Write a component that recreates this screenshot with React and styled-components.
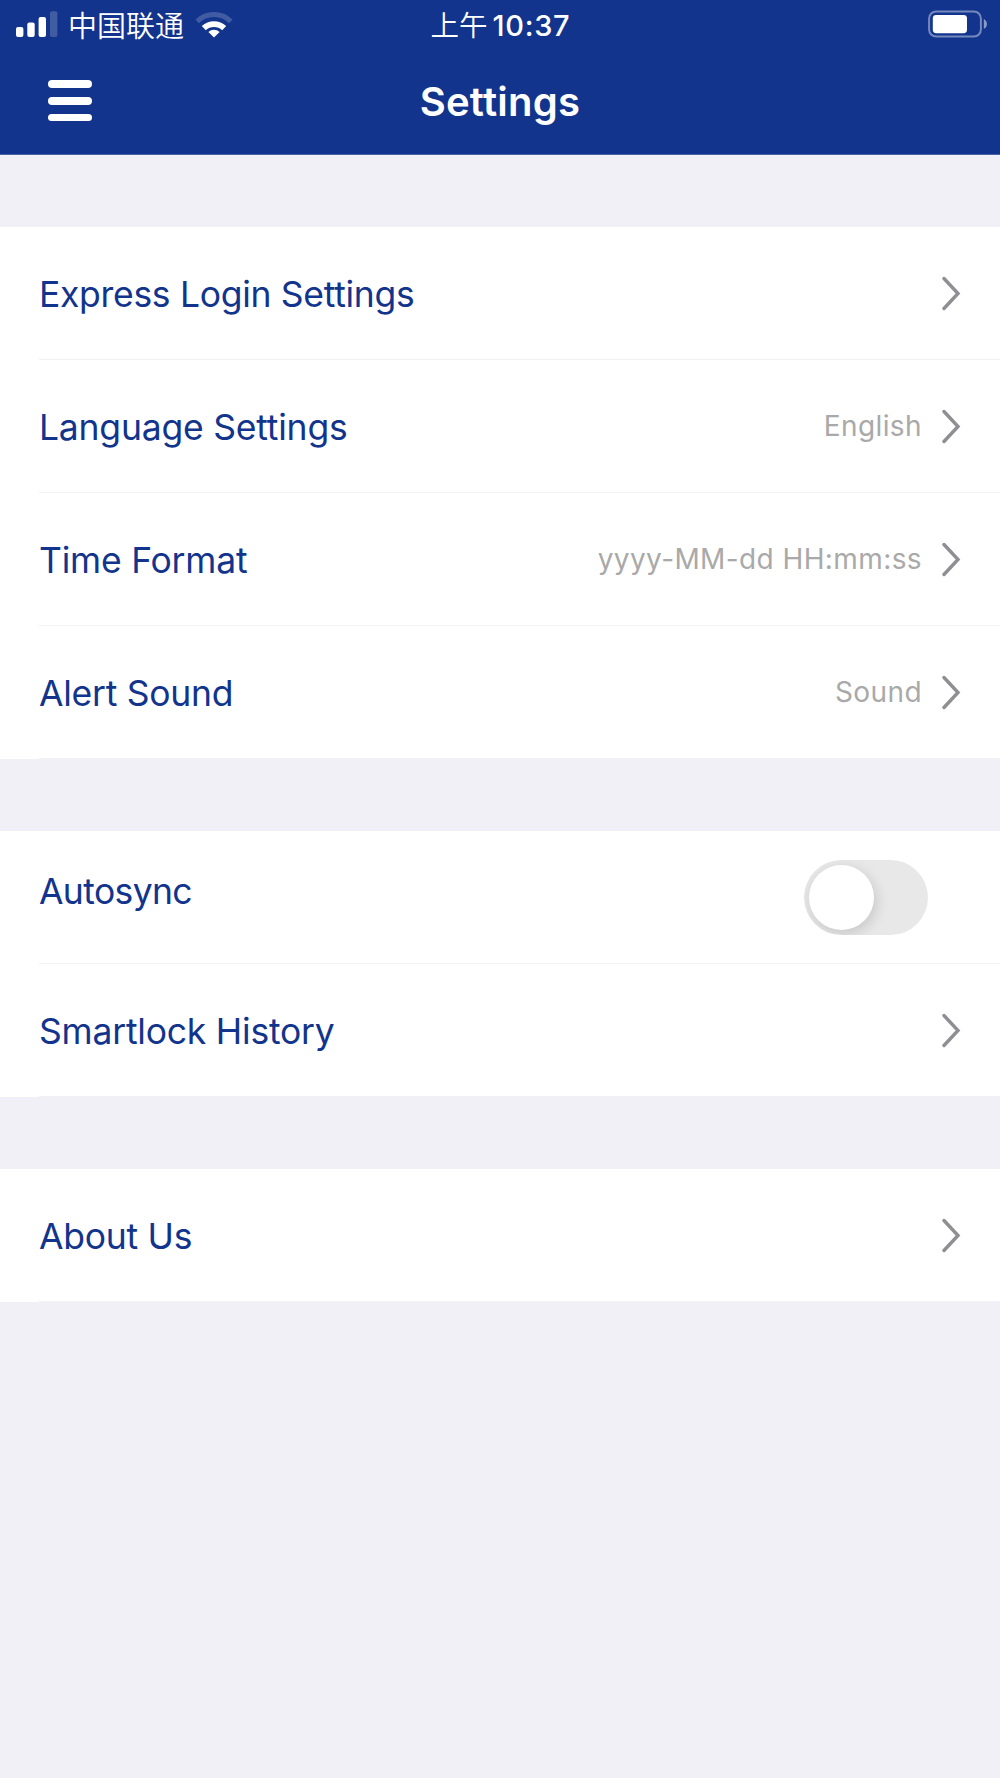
import React from 'react'
import styled, { createGlobalStyle } from 'styled-components';

class App extends React.Component {
    state = { autosync: false };

    toggleAutosync = () => {
        this.setState({ autosync: !this.state.autosync });
    }

    render() {
        return (
        <Screen>
            <GlobalStyle />
            <Header>
                <StatusBar>
                    <StatusLeft>
                        <SignalIcon />
                        <Carrier>中国联通</Carrier>
                        <WifiIcon />
                    </StatusLeft>
                    <Clock>
                        <ClockPeriod>上午</ClockPeriod>
                        <ClockTime>10:37</ClockTime>
                    </Clock>
                    <StatusRight>
                        <BatteryIcon />
                    </StatusRight>
                </StatusBar>
                <NavBar>
                    <MenuButton aria-label="Menu">
                        <MenuLine />
                        <MenuLine />
                        <MenuLine />
                    </MenuButton>
                    <Title>Settings</Title>
                </NavBar>
            </Header>
            <Group>
                <LinkRow label="Express Login Settings" spacing="-0.3px" />
                <LinkRow label="Language Settings" spacing="-0.21px" value="English" />
                <LinkRow label="Time Format" spacing="-0.22px" value="yyyy-MM-dd HH:mm:ss" />
                <LinkRow label="Alert Sound" spacing="-0.26px" value="Sound" />
            </Group>
            <Group>
                <Row>
                    <Label $raised $spacing="-0.62px">Autosync</Label>
                    <Track $on={this.state.autosync} onClick={this.toggleAutosync} aria-label="Autosync">
                        <Thumb />
                    </Track>
                </Row>
                <LinkRow label="Smartlock History" spacing="-0.21px" />
            </Group>
            <Group>
                <LinkRow label="About Us" spacing="-0.25px" />
            </Group>
        </Screen>
        )
    }
}

export default App;

const LinkRow = ({ label, spacing, value }) => (
    <Row>
        <Label $spacing={spacing}>{label}</Label>
        {value && <Value>{value}</Value>}
        <Chevron viewBox="0 0 19 35">
            <path d="M2 2.5 L16 17.5 L2 32.5" />
        </Chevron>
    </Row>
);

const SignalIcon = () => (
    <svg width="42" height="26" viewBox="0 0 42 26" fill="#fff">
        <rect x="0" y="16" width="7.4" height="10" rx="2" />
        <rect x="11.3" y="11.4" width="7.4" height="14.6" rx="2" />
        <rect x="22.6" y="6" width="7.4" height="20" rx="2" />
        <rect x="34" y="0.2" width="7.4" height="25.8" rx="2" opacity="0.2" />
    </svg>
);

const WifiIcon = () => (
    <svg width="38" height="28" viewBox="0 0 38 28" fill="none" stroke="#fff">
        <path d="M2.2 11.4 A24.2 24.2 0 0 1 35.8 11.4" strokeWidth="5" opacity="0.2" />
        <path d="M8.8 18.2 A14.8 14.8 0 0 1 29.2 18.2" strokeWidth="5.8" />
        <path d="M19 27.6 L13.4 21.9 A8.4 8.4 0 0 1 24.6 21.9 Z" fill="#fff" stroke="none" />
    </svg>
);

const BatteryIcon = () => (
    <svg width="60" height="28" viewBox="0 0 60 28">
        <rect x="1.1" y="1.5" width="51.8" height="25" rx="7" fill="none" stroke="#fff" strokeWidth="2" opacity="0.42" />
        <rect x="4.8" y="5" width="34.2" height="18.2" rx="3.4" fill="#fff" />
        <path d="M55.8 9 C60 11 60 17 55.8 19 Z" fill="#fff" opacity="0.5" />
    </svg>
);

const GlobalStyle = createGlobalStyle`
  body {
    margin: 0;
    background-color: #f0f0f6;
    font-family: Inter, "Noto Sans CJK SC", sans-serif;
  }
`;

const Screen = styled.div`
  width: 100%;
  min-height: 1778px;
  background-color: #f0f0f6;
`;

const Header = styled.header`
  box-sizing: border-box;
  height: 155px;
  background-color: #12348c;
  border-bottom: 1px solid #4a64a8;
  color: white;
`;

const StatusBar = styled.div`
  display: grid;
  grid-template-columns: 1fr auto 1fr;
  align-items: center;
  height: 48px;
  padding: 0 12px 0 16px;
`;

const StatusLeft = styled.div`
  display: flex;
  align-items: center;
`;

const StatusRight = styled.div`
  display: flex;
  justify-content: flex-end;
`;

const Carrier = styled.span`
  margin: 0 11px 0 10px;
  font-family: "Noto Sans CJK SC", sans-serif;
  font-size: 29px;
  font-weight: 350;
  line-height: 46px;
`;

const Clock = styled.div`
  display: flex;
  align-items: center;
  margin-right: 3px;
`;

const ClockPeriod = styled.span`
  font-family: "Noto Sans CJK SC", sans-serif;
  font-size: 28.5px;
  font-weight: 350;
  line-height: 46px;
`;

const ClockTime = styled.span`
  margin-left: 5px;
  padding-top: 3px;
  font-size: 29px;
  font-weight: 500;
  line-height: 45px;
  letter-spacing: 0.7px;
`;

const NavBar = styled.div`
  display: grid;
  grid-template-columns: 1fr auto 1fr;
  align-items: center;
  height: 106px;
`;

const MenuButton = styled.button`
  display: flex;
  flex-direction: column;
  gap: 9.4px;
  width: 44px;
  margin: 0 0 0.6px 48px;
  padding: 0;
  border: none;
  background: none;
  cursor: pointer;
`;

const MenuLine = styled.span`
  height: 7.6px;
  border-radius: 4px;
  background-color: white;
`;

const Title = styled.h1`
  margin: 2px 0 0;
  font-size: 40px;
  font-weight: 600;
  line-height: 48px;
  letter-spacing: 0.25px;
`;

const Group = styled.section`
  margin-top: 72px;
  background-color: white;
`;

const Row = styled.div`
  box-sizing: border-box;
  display: flex;
  align-items: center;
  height: 133px;
  margin-left: 39px;
  padding-right: 39px;
  border-bottom: 1px solid #f2f2f4;
`;

const Label = styled.span`
  flex: 1;
  padding: ${props => props.$raised ? '0 0 10px' : '4px 0 0'};
  color: #12348c;
  font-size: 35.5px;
  line-height: 44px;
  letter-spacing: ${props => props.$spacing};
  white-space: nowrap;
`;

const Value = styled.span`
  margin-right: 20px;
  color: #a9a9a9;
  font-size: 28px;
  line-height: 36px;
  letter-spacing: 0.4px;
  white-space: nowrap;
`;

const Chevron = styled.svg`
  width: 19px;
  height: 35px;
  margin-top: 1px;
  fill: none;
  stroke: #8e8e93;
  stroke-width: 3.4;
  stroke-linecap: round;
`;

const Track = styled.button`
  display: flex;
  justify-content: ${props => props.$on ? 'flex-end' : 'flex-start'};
  box-sizing: border-box;
  width: 123.5px;
  height: 75px;
  margin-right: 33.5px;
  padding: 5px;
  border: none;
  border-radius: 37.5px;
  background-color: ${props => props.$on ? '#12348c' : '#e8e8e8'};
  overflow: hidden;
  cursor: pointer;
`;

const Thumb = styled.span`
  width: 65px;
  height: 65px;
  border-radius: 50%;
  background-color: white;
  box-shadow: 2px 4px 14px rgba(0, 0, 0, 0.15);
`;
